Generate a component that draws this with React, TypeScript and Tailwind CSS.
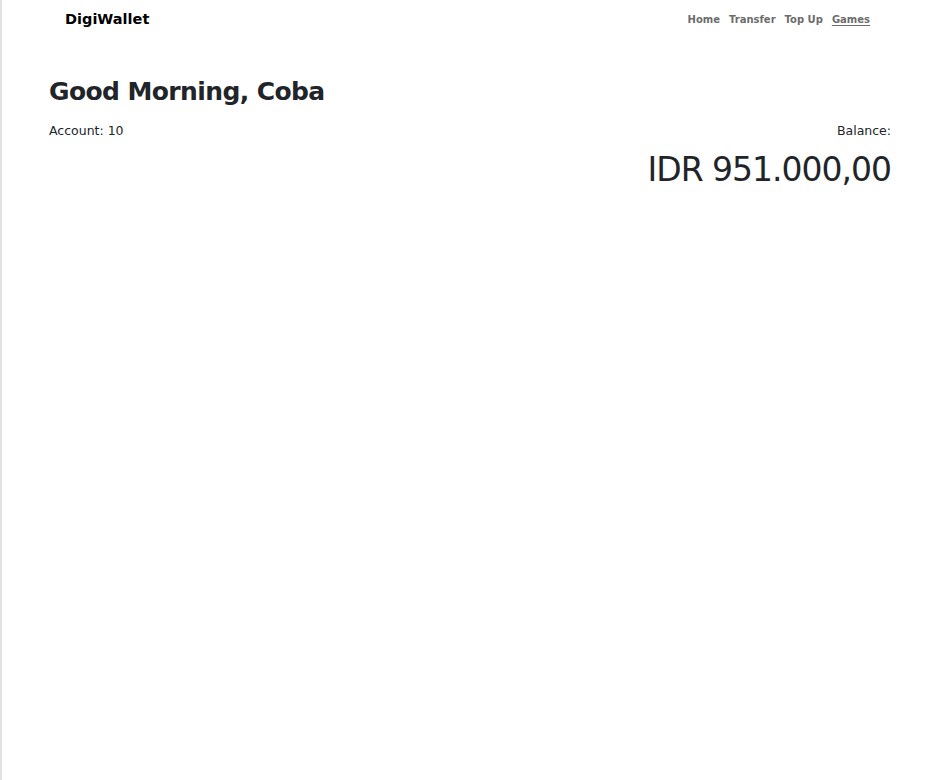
import React from 'react';

const navLinks = [
   { label: "Home", active: false },
   { label: "Transfer", active: false },
   { label: "Top Up", active: false },
   { label: "Games", active: true },
];

const Navbar = () => {
   return (
      <nav className="flex items-center justify-between h-[39px] pl-[63px] pr-[66px]">
         <span className="text-[14.5px] font-bold text-black">DigiWallet</span>
         <div className="flex items-center gap-[9px]">
            {navLinks.map((link) => (
               <a
                  key={link.label}
                  href="#"
                  className={"text-[10px] font-semibold text-[#6c6c6c] " + (link.active ? "underline underline-offset-2" : "")}
               >
                  {link.label}
               </a>
            ))}
         </div>
      </nav>
   );
};

const App = () => {
   return (
      <div className="min-h-[780px] border-l-2 border-[#e2e2e2] bg-white font-['DejaVu_Sans',sans-serif] text-[#212529]">
         <Navbar />
         <main className="pl-[47px] pr-[45px] pt-[36px]">
            <h1 className="text-[25px] font-bold leading-[34px] tracking-[-0.6px]">Good Morning, Coba</h1>
            <div className="flex justify-between mt-[14px]">
               <p className="text-[12.5px] leading-[16px]">Account: 10</p>
               <div className="flex flex-col items-end">
                  <p className="text-[12.5px] leading-[16px]">Balance:</p>
                  <p className="text-[33px] leading-[46px] mt-[8px] tracking-[-1px]">IDR 951.000,00</p>
               </div>
            </div>
         </main>
      </div>
   );
};

export default App;
